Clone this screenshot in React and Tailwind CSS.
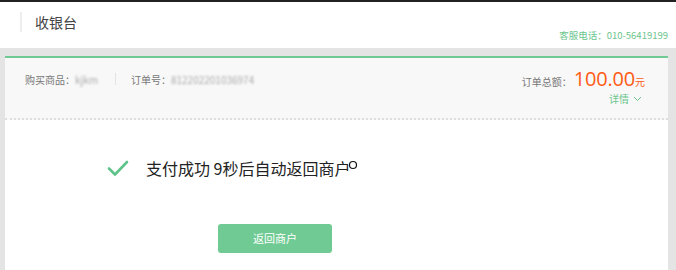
import { useState } from "react";

const font = { fontFamily: '"Noto Sans CJK SC", "Noto Sans", sans-serif' };

function CheckIcon() {
  return (
    <svg width="22" height="18" viewBox="0 0 22 18" fill="none">
      <path d="M2 9.5 L8 15.5 L20 3" stroke="#5fc48a" strokeWidth="2.6" strokeLinecap="round" strokeLinejoin="round" />
    </svg>
  );
}

function App() {
  const [seconds] = useState(9);

  return (
    <div className="w-[676px] h-[270px] overflow-hidden bg-[#e4e4e4] flex flex-col" style={font}>
      <div className="h-[2px] bg-[#222222]" />
      {/* header */}
      <div className="h-[46px] bg-white flex items-start justify-between pr-[8px]">
        <div className="flex items-center mt-[10px] ml-[20px]">
          <div className="w-[2px] h-[20px] bg-[#eeeeee]" />
          <span className="ml-[13px] text-[14px] text-[#444444] leading-[20px]">收银台</span>
        </div>
        <div className="mt-[26px] text-[9.5px] leading-[14px] text-[#6cc58e]">客服电话：010-56419199</div>
      </div>

      {/* card */}
      <div className="flex-1 pt-[8px] pl-[5px] pr-[8px]">
        <div className="h-full border-t-2 border-[#6fcb93] bg-white flex flex-col">
          <div className="h-[62px] bg-[#f8f8f8] border-b-2 border-dotted border-[#dddddd] flex justify-between px-[20px]">
            <div className="flex items-center h-[40px] pt-[2px] text-[10px] text-[#777777]">
              <span>购买商品：</span>
              <span className="text-[#aaaaaa] blur-[1px]">kjkm</span>
              <div className="w-px h-[12px] bg-[#e4e4e4] ml-[17px] mr-[15px]" />
              <span>订单号：</span>
              <span className="text-[#aaaaaa] blur-[1px]">812202201036974</span>
            </div>
            <div className="flex flex-col items-end pt-[11px] pr-[3px]">
              <div className="flex items-baseline leading-none">
                <span className="text-[10px] text-[#777777] mr-[2px]">订单总额：</span>
                <span className="text-[20px] text-[#ff5b14] tracking-[-0.2px]" style={{ fontFamily: '"Open Sans", sans-serif' }}>100.00</span>
                <span className="text-[10px] text-[#ff5b14]">元</span>
              </div>
              <div className="flex items-center gap-[4px] text-[10px] leading-[14px] text-[#6cc58e] mr-[3px] mt-[3px]">
                <span>详情</span>
                <svg width="9" height="6" viewBox="0 0 9 6" fill="none">
                  <path d="M1 1 L4.5 4.5 L8 1" stroke="#6cc58e" strokeWidth="1" />
                </svg>
              </div>
            </div>
          </div>

          <div className="flex items-center ml-[102px] mt-[35px] h-[26px]">
            <CheckIcon />
            <span className="ml-[17px] text-[16px] text-[#222222] leading-[26px]">
              支付成功 {seconds}秒后自动返回商户
            </span>
            <svg width="10" height="10" viewBox="0 0 10 10" className="-ml-[3px] -mt-[6px]">
              <circle cx="5" cy="5" r="3.5" fill="white" stroke="#111111" strokeWidth="1.2" />
            </svg>
          </div>

          <div className="flex ml-[213px] mt-[43px]">
            <button className="w-[114px] h-[29px] rounded-[3px] bg-[#6fcb93] text-white text-[11px]">返回商户</button>
          </div>
        </div>
      </div>
    </div>
  );
}

export default App;
